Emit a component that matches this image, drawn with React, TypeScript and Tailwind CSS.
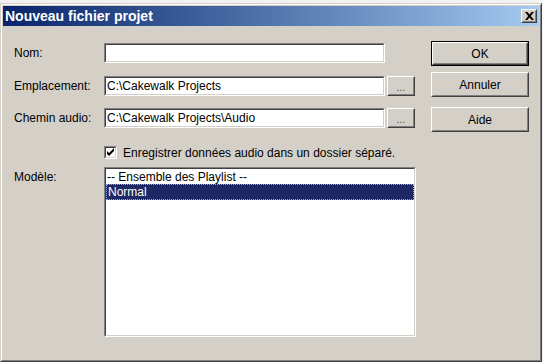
import React from 'react';

const font = { fontFamily: '"Liberation Sans", Arial, sans-serif' };

// sunken field frame (classic windows)
const Sunken = ({ className, children }: { className: string; children?: React.ReactNode }) => (
    <div className={`border border-t-[#808080] border-l-[#808080] border-b-white border-r-white ${className}`}>
        <div className="w-full h-full border border-t-[#404040] border-l-[#404040] border-b-[#d4d0c8] border-r-[#d4d0c8] bg-white overflow-hidden">
            {children}
        </div>
    </div>
);

const Raised = ({ className, children }: { className: string; children?: React.ReactNode }) => (
    <div className={`border border-t-white border-l-white border-b-[#404040] border-r-[#404040] bg-[#d4d0c8] ${className}`}>
        <div className="w-full h-full border border-t-[#d4d0c8] border-l-[#d4d0c8] border-b-[#808080] border-r-[#808080] flex items-center justify-center">
            {children}
        </div>
    </div>
);

export default function App() {
    return (
        <div className="w-[543px] h-[362px] bg-[#f2f2f2] relative overflow-hidden text-[12px] text-black" style={font}>
            {/* window */}
            <div className="absolute left-0 top-[3px] w-[542px] h-[359px] border border-t-[#d4d0c8] border-l-[#d4d0c8] border-b-[#404040] border-r-[#404040] bg-[#d4d0c8]">
                <div className="w-full h-full border border-t-white border-l-white border-b-[#808080] border-r-[#808080] p-px flex flex-col">
                    {/* title bar */}
                    <div className="h-[20px] flex items-center justify-between bg-linear-to-r from-[#0a246a] to-[#a6caf0] pl-[2px] pr-[2px]">
                        <div className="text-white font-bold text-[14px] leading-none">Nouveau fichier projet</div>
                        <Raised className="w-[16px] h-[14px]">
                            <svg width="9" height="8" viewBox="0 0 9 8">
                                <path d="M0 0h2.4l2.1 2.4L6.6 0H9L5.8 4 9 8H6.6L4.5 5.6 2.4 8H0l3.2-4z" fill="#000" />
                            </svg>
                        </Raised>
                    </div>

                    {/* body */}
                    <div className="flex pl-[11px] pt-[15px]">
                        <div className="w-[402px] pt-[2px] flex flex-col">
                            <div className="flex items-center h-[20px]">
                                <div className="w-[90px]">Nom:</div>
                                <Sunken className="w-[281px] h-[20px]" />
                            </div>
                            <div className="flex items-center h-[20px] mt-[13px]">
                                <div className="w-[90px]">Emplacement:</div>
                                <Sunken className="w-[281px] h-[20px]">
                                    <div className="pl-[1px] leading-[16px]">C:\Cakewalk Projects</div>
                                </Sunken>
                                <Raised className="w-[28px] h-[20px] ml-[2px]">
                                    <span className="text-[#404040] text-[10px] leading-none pt-[4px]">...</span>
                                </Raised>
                            </div>
                            <div className="flex items-center h-[20px] mt-[12px]">
                                <div className="w-[90px]">Chemin audio:</div>
                                <Sunken className="w-[281px] h-[20px]">
                                    <div className="pl-[1px] leading-[16px]">C:\Cakewalk Projects\Audio</div>
                                </Sunken>
                                <Raised className="w-[28px] h-[20px] ml-[2px]">
                                    <span className="text-[#404040] text-[10px] leading-none pt-[4px]">...</span>
                                </Raised>
                            </div>
                            <div className="flex items-center h-[13px] mt-[18px] pl-[90px]">
                                <Sunken className="w-[13px] h-[13px]">
                                    <svg width="11" height="11" viewBox="0 0 11 11" className="block -ml-px -mt-px">
                                        <path d="M2 4l2 2 5-5v3l-5 5-2-2z" fill="#000" />
                                    </svg>
                                </Sunken>
                                <div className="ml-[6px]">Enregistrer données audio dans un dossier séparé.</div>
                            </div>
                            <div className="flex items-start mt-[8px]">
                                <div className="w-[90px] pt-[1px]">Modèle:</div>
                                <Sunken className="w-[312px] h-[170px]">
                                    <div className="flex flex-col pt-[1px]">
                                        <div className="h-[15px] leading-[15px] pl-[1px]">-- Ensemble des Playlist --</div>
                                        <div className="h-[14px] leading-[14px] pl-[1px] bg-[#1e2864] text-white border border-dotted border-[#a0a8d0] -mt-px box-content">Normal</div>
                                    </div>
                                </Sunken>
                            </div>
                        </div>

                        {/* buttons */}
                        <div className="ml-[15px] flex flex-col">
                            <div className="w-[98px] h-[25px] border border-black">
                                <Raised className="w-full h-full">OK</Raised>
                            </div>
                            <Raised className="w-[98px] h-[25px] mt-[6px]">Annuler</Raised>
                            <Raised className="w-[98px] h-[25px] mt-[10px]">Aide</Raised>
                        </div>
                    </div>
                </div>
            </div>
        </div>
    );
}
